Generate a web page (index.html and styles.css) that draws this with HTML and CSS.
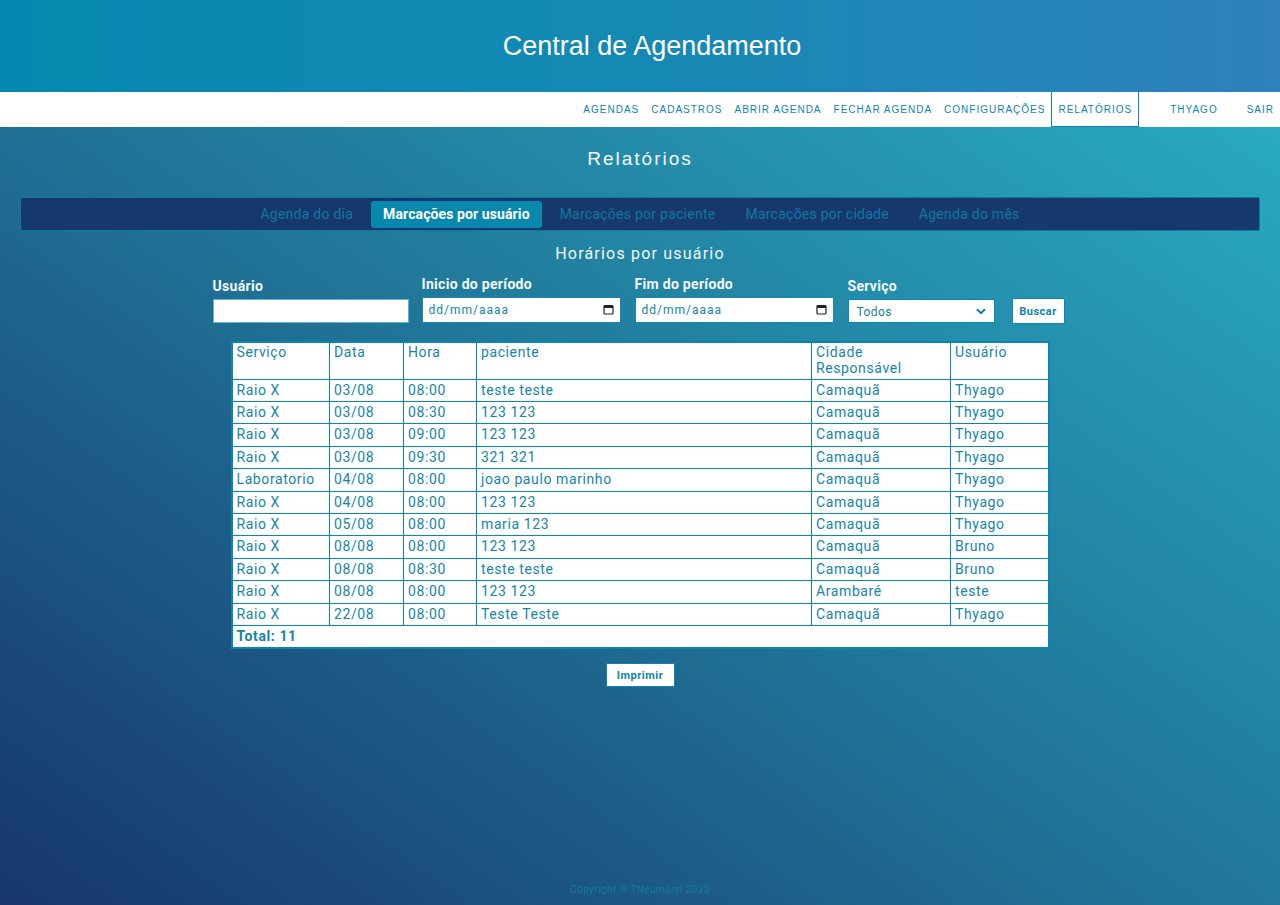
FILE: index.html
```html
<!DOCTYPE html>
<html lang="pt-BR">
<head>
<meta charset="utf-8">
<title>Central de Agendamento</title>
<link rel="stylesheet" href="styles.css">
</head>
<body>
<div class="page">
  <header class="top">
    <h1 class="brand">Central de Agendamento</h1>
  </header>
  <nav class="menu">
    <a class="menu-item">AGENDAS</a>
    <a class="menu-item">CADASTROS</a>
    <a class="menu-item">ABRIR AGENDA</a>
    <a class="menu-item">FECHAR AGENDA</a>
    <a class="menu-item">CONFIGURAÇÕES</a>
    <a class="menu-item active">RELATÓRIOS</a>
    <a class="menu-item user">THYAGO</a>
    <a class="menu-item logout">SAIR</a>
  </nav>

  <main class="content">
    <h2 class="page-title">Relatórios</h2>
    <div class="tabs">
      <a class="tab">Agenda do dia</a>
      <a class="tab active">Marcações por usuário</a>
      <a class="tab">Marcações por paciente</a>
      <a class="tab">Marcações por cidade</a>
      <a class="tab">Agenda do mês</a>
    </div>

    <h3 class="section-title">Horários por usuário</h3>

    <form class="filters">
      <div class="field field-user">
        <label class="label">Usuário</label>
        <input class="input" type="text">
      </div>
      <div class="field field-date">
        <label class="label">Inicio do período</label>
        <div class="date-input">
          <span class="date-text">dd/mm/aaaa</span>
          <svg class="cal" width="11" height="11" viewBox="0 0 11 11"><rect x="1" y="1.5" width="9" height="8.5" rx="1" fill="none" stroke="#222" stroke-width="1.2"/><rect x="1" y="1.5" width="9" height="2.5" fill="#222"/></svg>
        </div>
      </div>
      <div class="field field-date">
        <label class="label">Fim do período</label>
        <div class="date-input">
          <span class="date-text">dd/mm/aaaa</span>
          <svg class="cal" width="11" height="11" viewBox="0 0 11 11"><rect x="1" y="1.5" width="9" height="8.5" rx="1" fill="none" stroke="#222" stroke-width="1.2"/><rect x="1" y="1.5" width="9" height="2.5" fill="#222"/></svg>
        </div>
      </div>
      <div class="field field-select">
        <label class="label">Serviço</label>
        <div class="select-wrap">
          <select class="select"><option>Todos</option></select>
          <svg class="chev" width="10" height="7" viewBox="0 0 10 7"><path d="M1 1.2 L5 5.2 L9 1.2" fill="none" stroke="#0d7fa6" stroke-width="2"/></svg>
        </div>
      </div>
      <div class="field field-btn">
        <button type="button" class="btn btn-search">Buscar</button>
      </div>
    </form>

    <table class="report">
      <colgroup>
        <col class="c1"><col class="c2"><col class="c3"><col class="c4"><col class="c5"><col class="c6">
      </colgroup>
      <thead>
        <tr><th>Serviço</th><th>Data</th><th>Hora</th><th>paciente</th><th>Cidade Responsável</th><th>Usuário</th></tr>
      </thead>
      <tbody>
        <tr><td>Raio X</td><td>03/08</td><td>08:00</td><td>teste teste</td><td>Camaquã</td><td>Thyago</td></tr>
        <tr><td>Raio X</td><td>03/08</td><td>08:30</td><td>123 123</td><td>Camaquã</td><td>Thyago</td></tr>
        <tr><td>Raio X</td><td>03/08</td><td>09:00</td><td>123 123</td><td>Camaquã</td><td>Thyago</td></tr>
        <tr><td>Raio X</td><td>03/08</td><td>09:30</td><td>321 321</td><td>Camaquã</td><td>Thyago</td></tr>
        <tr><td>Laboratorio</td><td>04/08</td><td>08:00</td><td>joao paulo marinho</td><td>Camaquã</td><td>Thyago</td></tr>
        <tr><td>Raio X</td><td>04/08</td><td>08:00</td><td>123 123</td><td>Camaquã</td><td>Thyago</td></tr>
        <tr><td>Raio X</td><td>05/08</td><td>08:00</td><td>maria 123</td><td>Camaquã</td><td>Thyago</td></tr>
        <tr><td>Raio X</td><td>08/08</td><td>08:00</td><td>123 123</td><td>Camaquã</td><td>Bruno</td></tr>
        <tr><td>Raio X</td><td>08/08</td><td>08:30</td><td>teste teste</td><td>Camaquã</td><td>Bruno</td></tr>
        <tr><td>Raio X</td><td>08/08</td><td>08:00</td><td>123 123</td><td>Arambaré</td><td>teste</td></tr>
        <tr><td>Raio X</td><td>22/08</td><td>08:00</td><td>Teste Teste</td><td>Camaquã</td><td>Thyago</td></tr>
        <tr><td colspan="6" class="total">Total: 11</td></tr>
      </tbody>
    </table>

    <div class="actions">
      <button type="button" class="btn btn-print">Imprimir</button>
    </div>
  </main>

  <footer class="footer">Copyright © TNeumann 2022</footer>
</div>
</body>
</html>
```

FILE: styles.css
```css
* { box-sizing: border-box; }

html, body {
  margin: 0;
  padding: 0;
  height: 100%;
}

body {
  background: linear-gradient(to top right, #17366b 0%, #21789a 50%, #2ab2c9 100%);
  font-family: Roboto, "Liberation Sans", Arial, sans-serif;
  color: #1384a8;
}

.page {
  min-height: 905px;
  display: flex;
  flex-direction: column;
}

.top {
  height: 92px;
  background: linear-gradient(to right, #0689b0, #1389b3 45%, #2f82bb);
  display: flex;
  align-items: center;
  justify-content: center;
  padding-left: 24px;
}

.brand {
  margin: 0;
  font-family: "Liberation Sans", Arial, sans-serif;
  font-weight: normal;
  font-size: 27px;
  color: #ffffff;
  letter-spacing: 0;
}

.menu {
  height: 35px;
  background: #ffffff;
  display: flex;
  justify-content: flex-end;
  align-items: stretch;
}

.menu-item {
  display: flex;
  align-items: center;
  padding: 1px 5px 0;
  font-family: "Liberation Sans", Arial, sans-serif;
  font-size: 10px;
  letter-spacing: 1px;
  color: #0d86ad;
  border: 1px solid transparent;
  border-top: 0;
}

.menu-item.active {
  padding: 1px 6px 0;
  border: 1px solid #0d86ad;
  border-top: 0;
}

.menu-item.user { margin-left: 25px; }
.menu-item.logout { margin-left: 17px; padding-right: 5px; }

.content {
  display: flex;
  flex-direction: column;
  align-items: center;
}

.page-title {
  margin: 20px 0 0;
  height: 24px;
  line-height: 24px;
  font-family: "Liberation Sans", Arial, sans-serif;
  font-weight: normal;
  font-size: 19px;
  letter-spacing: 2px;
  color: #f4fbfd;
}

.tabs {
  margin-top: 26px;
  width: 1240px;
  height: 34px;
  background: #17386d;
  border: 1px solid #0c7aa2;
  border-radius: 2px;
  display: flex;
  justify-content: center;
  align-items: center;
  gap: 6px;
}

.tab {
  padding: 5px 12px;
  line-height: 17px;
  font-size: 14px;
  letter-spacing: 0.25px;
  color: #0e78a2;
  border-radius: 3px;
}

.tab.active {
  background: #0888ac;
  color: #ffffff;
  font-weight: bold;
  letter-spacing: 0.1px;
}

.section-title {
  margin: 13px 0 0;
  line-height: 20px;
  font-weight: normal;
  font-size: 16px;
  letter-spacing: 1.2px;
  color: #eef8fb;
}

.filters {
  margin: 12px 0 0;
  display: flex;
  align-items: flex-end;
  gap: 13px;
  padding-right: 3px;
}

.field {
  display: flex;
  flex-direction: column;
}

.label {
  font-size: 14px;
  font-weight: bold;
  line-height: 17px;
  margin-bottom: 4px;
  color: #f3fafc;
  letter-spacing: 0.3px;
}

.input {
  width: 196px;
  height: 24px;
  border: 1px solid #5fb5d0;
  background: #ffffff;
  margin: 0;
}

.date-input {
  width: 199px;
  height: 26px;
  background: #ffffff;
  border: 1px solid #1a86ab;
  display: flex;
  align-items: center;
  justify-content: space-between;
  padding: 0 6px 0 6px;
}

.date-text {
  font-size: 12px;
  letter-spacing: 1px;
  color: #1582a6;
}

.cal { display: block; margin-bottom: 2px; }

.field-date + .field-date { margin-left: 1px; }
.field-select { margin-left: 1px; }

.select-wrap {
  position: relative;
  width: 147px;
  height: 24px;
}

.select {
  appearance: none;
  -webkit-appearance: none;
  width: 100%;
  height: 100%;
  border: 1px solid #0c86ad;
  border-radius: 0;
  background: #ffffff;
  font-family: Roboto, "Liberation Sans", Arial, sans-serif;
  font-size: 12px;
  letter-spacing: 0.4px;
  color: #1382a8;
  padding: 2px 8px 0;
  margin: 0;
}

.chev {
  position: absolute;
  right: 9px;
  top: 9px;
  pointer-events: none;
}

.field-btn { margin-left: 4px; }

.btn {
  background: #ffffff;
  border: 1px solid #0c86ad;
  border-radius: 1px;
  font-family: Roboto, "Liberation Sans", Arial, sans-serif;
  font-size: 11px;
  letter-spacing: 0.5px;
  color: #0d84aa;
  font-weight: bold;
  padding: 0;
  margin: 0;
}

.btn-search {
  width: 53px;
  height: 26px;
  margin-bottom: -1px;
}

.report {
  margin-top: 18px;
  width: 817px;
  border-collapse: collapse;
  table-layout: fixed;
  background: #ffffff;
  border: 2px solid #0a87ae;
  font-size: 14px;
  letter-spacing: 0.6px;
}

.c1 { width: 98px; }
.c2 { width: 74px; }
.c3 { width: 73px; }
.c4 { width: 335px; }
.c5 { width: 139px; }
.c6 { width: 98px; }

.report th,
.report td {
  border: 1px solid #0a87ae;
  text-align: left;
  vertical-align: top;
  padding: 2px 3px 2px 4px;
  color: #1585a8;
  font-weight: normal;
}

.report th {
  line-height: 16px;
  height: 37px;
  padding-top: 1px;
}

.report td {
  line-height: 17.4px;
}

.report td.total {
  font-weight: bold;
  padding-top: 2px;
  padding-bottom: 2px;
}

.actions {
  margin-top: 14px;
}

.btn-print {
  width: 69px;
  height: 24px;
}

.footer {
  margin-top: auto;
  text-align: center;
  font-size: 10px;
  letter-spacing: 0.4px;
  color: #0e7aa4;
  padding-bottom: 9px;
  line-height: 12px;
}
```
